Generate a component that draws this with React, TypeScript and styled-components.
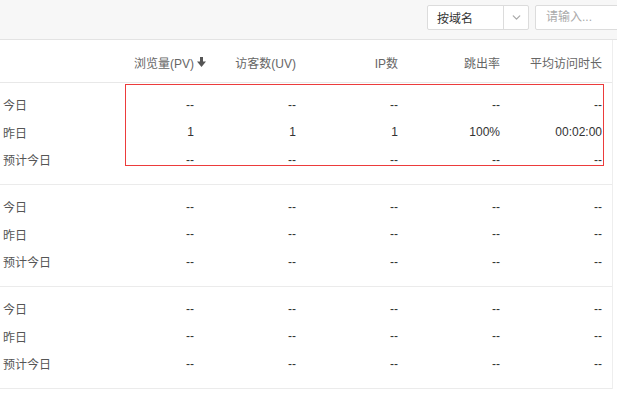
import { FC } from 'react'
import styled, { createGlobalStyle } from 'styled-components'
import { ChevronDown } from 'lucide-react'

const Global = createGlobalStyle`
	body {
		margin: 0;
		background: #fff;
		font-family: "Liberation Sans", "Noto Sans CJK SC", sans-serif;
		font-size: 12px;
		color: #333;
		overflow: hidden;
	}
`

const Toolbar = styled.div`
	height: 39px;
	display: flex;
	align-items: center;
	justify-content: flex-end;
	gap: 6px;
	background: #f7f7f7;
	border-bottom: 1px solid #e3e3e3;
	overflow: hidden;
`

const Select = styled.div`
	display: flex;
	width: 102px;
	height: 25px;
	box-sizing: border-box;
	background: #fff;
	border: 1px solid #dcdcdc;
	border-radius: 2px;
	margin-top: -5px;

	span {
		flex: 1;
		display: flex;
		align-items: center;
		padding-left: 9px;
		color: #333;
	}

	i {
		width: 24px;
		display: flex;
		align-items: center;
		justify-content: center;
		border-left: 1px solid #dcdcdc;
	}
`

const Input = styled.input`
	width: 110px;
	height: 25px;
	box-sizing: border-box;
	margin: -5px -28px 0 0;
	border: 1px solid #dcdcdc;
	border-radius: 2px;
	padding: 0 10px;
	font: inherit;
	background: #fff;

	&::placeholder {
		color: #aaa;
	}
`

const Table = styled.div`
	width: 613px;
	box-sizing: border-box;
	border-right: 1px solid #eee;
`

const Grid = styled.div`
	display: grid;
	grid-template-columns: repeat(6, 102px);
	align-items: center;
`

const HeadRow = styled(Grid)`
	height: 42px;
	border-bottom: 1px solid #e8e8e8;
	color: #666;
`

const HeadCell = styled.div`
	position: relative;
	text-align: right;
	padding-right: 10px;
	margin-top: 2px;
`

const SortIcon = styled.svg`
	position: absolute;
	right: -2px;
	top: 3px;
`

const Group = styled.div`
	position: relative;
	padding: 8px 0 10.5px;
	border-bottom: 1px solid #ebebeb;
`

const Row = styled(Grid)`
	height: 27.5px;
`

const Label = styled.div`
	padding-left: 3px;
	color: #555;
`

const Value = styled.div`
	text-align: right;
	padding-right: 10px;
	color: #333;
`

const Highlight = styled.div`
	position: absolute;
	left: 125px;
	top: 1px;
	width: 479px;
	height: 82px;
	box-sizing: border-box;
	border: 1px solid #ec3b3b;
	pointer-events: none;
`

const columns = ['浏览量(PV)', '访客数(UV)', 'IP数', '跳出率', '平均访问时长']
const labels = ['今日', '昨日', '预计今日']
const empty = ['--', '--', '--', '--', '--']

const groups: string[][][] = [
	[empty, ['1', '1', '1', '100%', '00:02:00'], empty],
	[empty, empty, empty],
	[empty, empty, empty],
]

const App: FC = () => {
	return (
		<>
			<Global />
			<Toolbar>
				<Select>
					<span>按域名</span>
					<i><ChevronDown size={13} color="#aaa" strokeWidth={2.4} /></i>
				</Select>
				<Input placeholder="请输入..." />
			</Toolbar>
			<Table>
				<HeadRow>
					<div />
					{columns.map((c, i) => (
						<HeadCell key={c}>
							{c}
							{i === 0 && (
								<SortIcon width="9" height="10" viewBox="0 0 9 10">
									<rect x="3" y="0" width="3" height="5" fill="#555" />
									<path d="M0 4.5 H9 L4.5 10 Z" fill="#555" />
								</SortIcon>
							)}
						</HeadCell>
					))}
				</HeadRow>
				{groups.map((rows, g) => (
					<Group key={g}>
						{rows.map((vals, r) => (
							<Row key={r}>
								<Label>{labels[r]}</Label>
								{vals.map((v, k) => <Value key={k}>{v}</Value>)}
							</Row>
						))}
						{g === 0 && <Highlight />}
					</Group>
				))}
			</Table>
		</>
	)
}

export default App
